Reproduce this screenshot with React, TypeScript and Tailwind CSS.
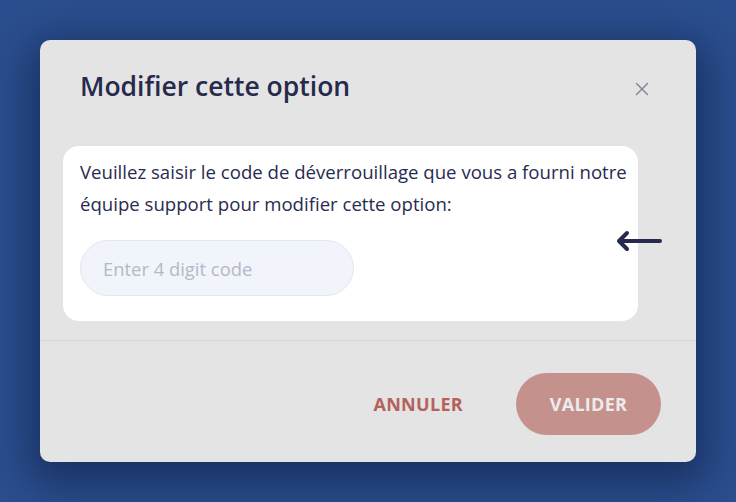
import { X } from "lucide-react";

export default function App() {
  return (
    <div className="w-[736px] h-[502px] bg-[#2b4e8e] flex items-start justify-center pt-10 overflow-hidden">
      <div
        className="w-[656px] h-[422px] bg-[#e4e4e4] rounded-[10px] shadow-[0_12px_40px_10px_rgba(10,25,60,0.55)] flex flex-col relative"
        style={{ fontFamily: "'Open Sans', sans-serif" }}
      >
        {/* Header */}
        <div className="flex items-center justify-between pl-10 pr-[43px] pt-[28px]">
          <h2 className="text-[26.5px] leading-[36px] font-semibold text-[#262a4c]">
            Modifier cette option
          </h2>
          <button type="button" className="text-[#7c8292] mt-[6px]">
            <X size={22} strokeWidth={1.5} />
          </button>
        </div>

        {/* Body */}
        <div className="mt-[42px] ml-[23px] w-[575px] bg-white rounded-[16px] pl-[17px] pr-[4px] pt-[10px] pb-[25px]">
          <p className="text-[18.6px] leading-[32px] text-[#272b50]">
            Veuillez saisir le code de déverrouillage que vous a fourni notre équipe support pour
            modifier cette option:
          </p>
          <input
            type="text"
            placeholder="Enter 4 digit code"
            className="mt-[20px] w-[274px] h-[56px] rounded-full bg-[#f1f4fa] border border-[#e1e6f0] px-[22px] text-[18.4px] text-[#272b50] placeholder:text-[#b3b9c9] outline-none"
          />
        </div>

        {/* Arrow overlay */}
        <svg
          className="absolute left-[576px] top-[189px]"
          width="48"
          height="24"
          viewBox="0 0 48 24"
          fill="none"
          stroke="#252a4e"
          strokeWidth="4"
          strokeLinecap="round"
          strokeLinejoin="round"
        >
          <path d="M44 12H3M11 4L3 12L11 20" />
        </svg>

        <div className="mt-[19px] h-px bg-[#d3d3df]" />

        {/* Footer */}
        <div className="flex items-center justify-end gap-[53px] pr-[35px] pt-[32px]">
          <button
            type="button"
            className="text-[18px] font-bold tracking-[0.3px] text-[#b5615c]"
          >
            ANNULER
          </button>
          <button
            type="button"
            className="w-[145px] h-[62px] rounded-full bg-[#c4918d] text-[18px] font-bold tracking-[0.3px] text-[#ececec]"
          >
            VALIDER
          </button>
        </div>
      </div>
    </div>
  );
}
